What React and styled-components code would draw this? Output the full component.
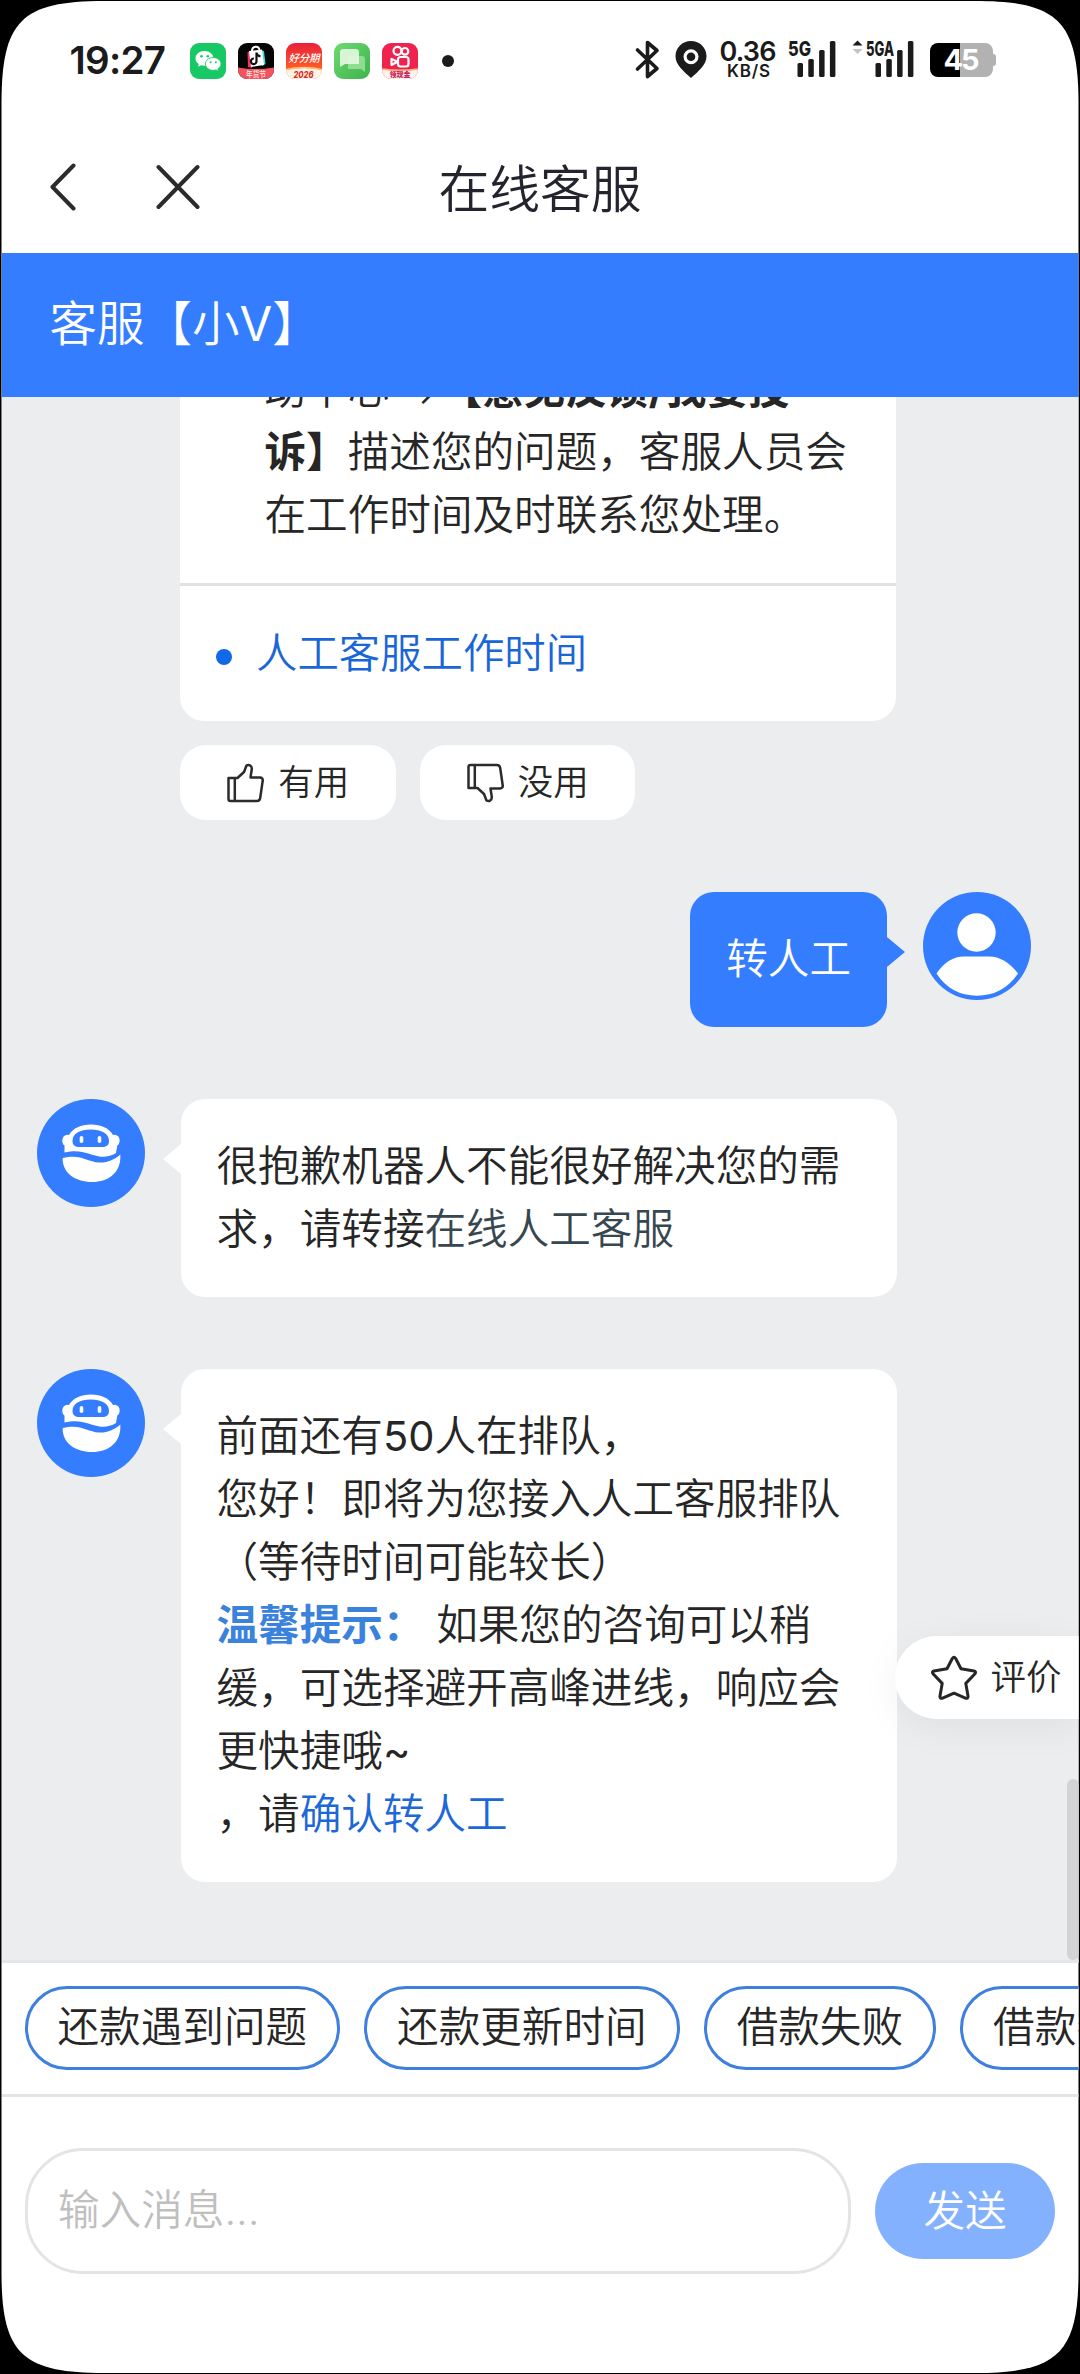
import styled, { createGlobalStyle } from 'styled-components';

const CHIPS = ['还款遇到问题', '还款更新时间', '借款失败', '借款额度'];

const App = () => {
  return (
    <>
      <GlobalStyle />
      <Screen>
        <StatusBar>
          <Clock>19:27</Clock>
          <AppIcons>
            <WechatIcon />
            <ShopIcon />
            <InstallmentIcon />
            <MessagesIcon />
            <KuaishouIcon />
          </AppIcons>
          <MoreDot />
          <StatusIcons />
        </StatusBar>

        <NavBar>
          <NavActions>
            <svg width="26" height="48" viewBox="0 0 26 48">
              <path d="M23.500 2.500L2.500 24l21 21.500" {...navStroke} />
            </svg>
            <svg width="44" height="46" viewBox="0 0 44 46">
              <path d="M2.500 3l39 40M41.500 3l-39 40" {...navStroke} />
            </svg>
          </NavActions>
          <NavTitle>在线客服</NavTitle>
        </NavBar>

        <AgentBar>
          <span>
            客服【小<Latin>V</Latin>】
          </span>
        </AgentBar>

        <Chat>
          <Answer>
            <AnswerCard>
              <AnswerBody>
                请您前往帮
                <br />
                助中心 →<b>【意见反馈/我要投</b>
                <br />
                <b>诉】</b>描述您的问题，客服人员会
                <br />
                在工作时间及时联系您处理。
              </AnswerBody>
              <RelatedLink>人工客服工作时间</RelatedLink>
            </AnswerCard>
            <Feedback>
              <FeedbackButton>
                <ThumbIcon />
                有用
              </FeedbackButton>
              <FeedbackButton>
                <ThumbIcon down />
                没用
              </FeedbackButton>
            </Feedback>
          </Answer>

          <UserRow>
            <UserBubble>转人工</UserBubble>
            <UserAvatar />
          </UserRow>

          <BotRow>
            <BotAvatar />
            <BotBubble>
              很抱歉机器人不能很好解决您的需
              <br />
              求，请转接<Muted>在线人工客服</Muted>
            </BotBubble>
          </BotRow>

          <BotRow>
            <BotAvatar />
            <BotBubble>
              前面还有<Latin>50</Latin>人在排队，
              <br />
              您好！即将为您接入人工客服排队
              <br />
              （等待时间可能较长）
              <br />
              <Tip>温馨提示：</Tip> 如果您的咨询可以稍
              <br />
              缓，可选择避开高峰进线，响应会
              <br />
              更快捷哦<Latin>~</Latin>
              <br />
              ，请<Link>确认转人工</Link>
            </BotBubble>
          </BotRow>

          <RateButton>
            <StarIcon />
            评价
          </RateButton>
          <ScrollThumb />
        </Chat>

        <ChipBar>
          {CHIPS.map((chip) => (
            <Chip key={chip}>{chip}</Chip>
          ))}
        </ChipBar>

        <Composer>
          <MessageInput placeholder="输入消息..." />
          <SendButton>发送</SendButton>
        </Composer>
      </Screen>
    </>
  );
};

const navStroke = {
  fill: 'none',
  stroke: '#2b2b2d',
  strokeWidth: 4,
  strokeLinecap: 'round',
  strokeLinejoin: 'round',
};

const iconFont = "Inter, 'Noto Sans CJK SC', sans-serif";

const WechatIcon = () => (
  <svg width="36" height="36" viewBox="0 0 36 36">
    <rect width="36" height="36" rx="9" fill="#17c964" />
    <path d="M14.500 8C9.500 8 5.500 11.300 5.500 15.400c0 2.300 1.300 4.300 3.300 5.700L8 23.800l3.100-1.600c1.100.3 2.200.5 3.400.5 5 0 9-3.300 9-7.300S19.500 8 14.500 8z" fill="#fff" />
    <path d="M23.200 14.500c-4.300 0-7.800 2.900-7.800 6.400s3.500 6.400 7.800 6.400c1 0 1.900-.1 2.700-.4l2.700 1.300-.7-2.300c1.900-1.200 3.100-3 3.100-5 0-3.500-3.500-6.400-7.800-6.400z" fill="#fff" stroke="#17c964" strokeWidth=".9" />
    <g fill="#17c964">
      <circle cx="11.500" cy="13.200" r="1.300" />
      <circle cx="17.800" cy="13.200" r="1.300" />
      <circle cx="20.600" cy="19.300" r="1" />
      <circle cx="25.800" cy="19.300" r="1" />
    </g>
  </svg>
);

const ShopIcon = () => (
  <svg width="36" height="36" viewBox="0 0 36 36">
    <clipPath id="shop">
      <rect width="36" height="36" rx="9" />
    </clipPath>
    <g clipPath="url(#shop)">
      <rect width="36" height="36" fill="#050505" />
      <path d="M14 8c0-5 7-6 7.500-1" fill="none" stroke="#fff" strokeWidth="2" />
      <path d="M9.500 9l3-.5L14 25l-4-1z" fill="#f2365e" />
      <path d="M22 7l4 1 1.500 13-3.500 2z" fill="#35e0e0" />
      <path d="M11 8l13-1.500L26 22l-13 2z" fill="#fff" />
      <path d="M18.500 9.500v8.700a2.800 2.800 0 1 1-2.600-2.700M18.500 10c.5 2 2 3.200 4 3.300" fill="none" stroke="#111" strokeWidth="2.200" />
      <path d="M0 24.500q18 3 36 0V36H0z" fill="#f2545f" />
      <text x="18" y="34.300" fontSize="7.500" fontWeight="500" fill="#ffe3e0" textAnchor="middle" textLength="20" lengthAdjust="spacingAndGlyphs" fontFamily={iconFont}>
        年货节
      </text>
    </g>
  </svg>
);

const InstallmentIcon = () => (
  <svg width="36" height="36" viewBox="0 0 36 36">
    <defs>
      <linearGradient id="instBg" x1="0" y1="0" x2="0" y2="1">
        <stop offset="0" stopColor="#e8203c" />
        <stop offset=".7" stopColor="#ff5a26" />
      </linearGradient>
      <clipPath id="inst">
        <rect width="36" height="36" rx="9" />
      </clipPath>
    </defs>
    <g clipPath="url(#inst)">
      <rect width="36" height="36" fill="url(#instBg)" />
      <path d="M0 27q18-4 36 0v9H0z" fill="#fff3e6" />
      <path d="M0 26.500q18-4 36 0" fill="none" stroke="#ffc27a" strokeWidth="1.500" />
      <text x="18" y="19" fontSize="10.500" fontWeight="500" fontStyle="italic" fill="#fff" textAnchor="middle" textLength="31" fontFamily={iconFont}>
        好分期
      </text>
      <text x="17.500" y="34.800" fontSize="9" fontWeight="800" fontStyle="italic" fill="#d92a22" textAnchor="middle" textLength="20" lengthAdjust="spacingAndGlyphs" fontFamily={iconFont}>
        2026
      </text>
    </g>
  </svg>
);

const MessagesIcon = () => (
  <svg width="36" height="36" viewBox="0 0 36 36">
    <defs>
      <linearGradient id="msgBg" x1="0" y1="0" x2="1" y2="1">
        <stop offset="0" stopColor="#6fd972" />
        <stop offset="1" stopColor="#3cb44b" />
      </linearGradient>
    </defs>
    <rect width="36" height="36" rx="9" fill="url(#msgBg)" />
    <path d="M14 13h14a3 3 0 0 1 3 3v13l-4-3H14z" fill="#a5e6a4" fillOpacity=".75" />
    <path d="M9 6h13a3 3 0 0 1 3 3v12H11l-5 3V9a3 3 0 0 1 3-3z" fill="#e6f8e2" fillOpacity=".9" />
  </svg>
);

const KuaishouIcon = () => (
  <svg width="36" height="36" viewBox="0 0 36 36">
    <defs>
      <clipPath id="ks">
        <rect width="36" height="36" rx="9" />
      </clipPath>
    </defs>
    <g clipPath="url(#ks)">
      <rect width="36" height="36" fill="#ee2350" />
      <path d="M0 26.500q18 2.500 36 0V36H0z" fill="#fff4ec" />
      <path d="M0 26q18 2.500 36 0" fill="none" stroke="#ffb27c" strokeWidth="1.500" />
      <g fill="none" stroke="#fff" strokeWidth="2.200">
        <circle cx="15.500" cy="7.800" r="4" />
        <circle cx="23" cy="8.300" r="3.300" />
        <rect x="16" y="14" width="10.500" height="9.500" rx="2.500" />
        <path d="M15.500 18.700L9.500 16v6z" strokeLinejoin="round" />
      </g>
      <text x="18" y="34.400" fontSize="7" fontWeight="800" fill="#c3215a" textAnchor="middle" textLength="21" lengthAdjust="spacingAndGlyphs" fontFamily={iconFont}>
        领现金
      </text>
    </g>
  </svg>
);

const SignalBars = ({ x }) => (
  <g fill="#1b1b1c">
    <rect x={x} y="23" width="5.500" height="14" rx="1.500" />
    <rect x={x + 10.8} y="19" width="5.500" height="18" rx="1.500" />
    <rect x={x + 21.6} y="10" width="5.500" height="27" rx="1.500" />
    <rect x={x + 32.4} y="1" width="5.500" height="36" rx="1.500" />
  </g>
);

const StatusIcons = () => (
  <StatusSvg width="364" height="42" viewBox="0 0 364 42" fontFamily={iconFont} fill="#1b1b1c">
    <path d="M2.500 10L22 28.500 12.500 36.500V2.500L22 10.500 2.500 29" fill="none" stroke="#1b1b1c" strokeWidth="3.600" strokeLinejoin="round" strokeLinecap="round" />
    <path
      fillRule="evenodd"
      d="M56 1c-8.800 0-15.500 6.700-15.500 15.200C40.500 25 49 31.500 56 38c7-6.500 15.500-13 15.500-21.800C71.500 7.700 64.800 1 56 1zm0 8.200a7.500 7.500 0 1 1 0 15 7.500 7.500 0 0 1 0-15z"
    />
    <circle cx="56" cy="16.700" r="4.300" />
    <text x="84.500" y="20.500" fontSize="27" fontWeight="600" textLength="57">0.36</text>
    <text x="92" y="36.500" fontSize="17" fontWeight="600" textLength="43">KB/S</text>
    <text x="153" y="15.500" fontSize="20.500" fontWeight="800" textLength="23" lengthAdjust="spacingAndGlyphs">5G</text>
    <SignalBars x={162.5} />
    <path d="M217.500 5.500L222.500.5l5 5z" />
    <path d="M217.500 9l5 5 5-5z" fill="#c4c4c4" />
    <text x="231" y="15.500" fontSize="20.500" fontWeight="800" textLength="28" lengthAdjust="spacingAndGlyphs">5GA</text>
    <SignalBars x={240.5} />
    <path d="M303 3h22v34h-22a8 8 0 0 1-8-8V11a8 8 0 0 1 8-8z" fill="#000" />
    <path d="M325 3h25a8 8 0 0 1 8 8v3q3 0 3 3v6q0 3-3 3v3a8 8 0 0 1-8 8h-25z" fill="#b2b2b2" />
    <text x="308.500" y="30" fontSize="29" fontWeight="700" fill="#fff" textLength="36">45</text>
  </StatusSvg>
);

const ThumbIcon = ({ down }) => (
  <svg width="38" height="40" viewBox="0 0 38 40" fill="none" stroke="#2b2b2b" strokeWidth="2.500" strokeLinejoin="round">
    <g transform={down ? 'matrix(1 0 0 -1 0 40)' : undefined}>
      <path d="M2.500 15h9l6.500-6 2.500-6.500c2.600-1.500 5.500.5 5.300 3.500L24.500 14.500H34c2 0 3 1.500 2.700 3.300L34.200 35c-.3 1.800-1.400 3-3.200 3H4.500c-1.200 0-2-.8-2-2z" />
      <path d="M8.800 15v23" />
    </g>
  </svg>
);

const StarIcon = () => (
  <svg width="48" height="46" viewBox="0 0 48 46" fill="none" stroke="#262626" strokeWidth="3" strokeLinejoin="round">
    <path d="M22.300 3.500q1.700-2.500 3.400 0l5.300 10.200 13 2.300q2.500.8 1 2.800l-9.200 9.600 2.300 13q-.2 2.600-2.700 1.700L24 38.200l-11.400 4.900q-2.500.9-2.700-1.700l2.300-13L3 18.800q-1.500-2 1-2.800l13-2.300z" />
  </svg>
);

const BotAvatar = () => (
  <AvatarSvg viewBox="0 0 108 108">
    <circle cx="54" cy="54" r="54" fill="#347dff" />
    <path d="M27.500 53.500V46.500c-3-1.500-3-8.500.5-10q2-1 4-.5C36 29 44 25.500 54 25.500S72 29 76 36q2-.5 4 .5c3.500 1.500 3.500 8.500.3 10l-1.300 7.500c-5 2.900-10 4.300-15.500 3.700C52 56 45 49.500 27.500 53.500z" fill="#fff" />
    <path d="M42 48c-4.500 0-6.500-2.500-6.500-6C35.500 34.500 43 30.500 53.700 30.500S72 34.500 72 42c0 3.500-2 6-6.500 6z" fill="#347dff" />
    <rect x="42.700" y="37" width="3.600" height="7" rx="1.800" fill="#fff" />
    <rect x="60.700" y="37" width="3.600" height="7" rx="1.800" fill="#fff" />
    <path d="M25.700 59c18-4.500 24 3.500 36.300 4.500 8 .5 16-3 21.300-8C84.500 73 72 83 55 83S25 73.500 25.700 59z" fill="#fff" />
  </AvatarSvg>
);

const UserAvatar = () => (
  <AvatarSvg viewBox="0 0 108 108">
    <circle cx="54" cy="54" r="54" fill="#347dff" />
    <circle cx="53.500" cy="40.500" r="19.200" fill="#fff" />
    <path d="M13.500 81.500Q25 64.500 41 64.500h25q16 0 29 17Q80 103.700 54 103.700T13.500 81.500z" fill="#fff" />
  </AvatarSvg>
);

const GlobalStyle = createGlobalStyle`
  * {
    box-sizing: border-box;
  }

  body {
    margin: 0;
    background: #000;
  }

  svg {
    display: block;
    flex: none;
  }

  button,
  input {
    font: inherit;
    color: inherit;
  }
`;

const Screen = styled.div`
  display: flex;
  flex-direction: column;
  width: 1080px;
  height: 2374px;
  padding: 1px 1.5px;
  overflow: hidden;
  font-family: Inter, 'Noto Sans CJK SC', sans-serif;
  font-size: 41.6px;
  font-weight: 350;
  line-height: 63px;
  color: #262626;
  background: #fff;
  clip-path: path(
    'M1.500 104C1.500 21 21 1 104 1H975C1058 1 1078.500 21 1078.500 104V2272C1078.500 2353 1058 2373 975 2373H104C21 2373 1.500 2353 1.500 2272Z'
  );
`;

const StatusBar = styled.div`
  display: flex;
  align-items: center;
  height: 120px;
  padding: 0 80px 0 68px;
`;

const Clock = styled.span`
  width: 120px;
  font-size: 38.5px;
  font-weight: 600;
  letter-spacing: -0.7px;
  line-height: 60px;
  padding-bottom: 2px;
  color: #1b1b1c;
`;

const AppIcons = styled.div`
  display: flex;
  gap: 12px;
`;

const MoreDot = styled.span`
  width: 12px;
  height: 12px;
  margin-left: 24px;
  border-radius: 50%;
  background: #1b1b1c;
`;

const StatusSvg = styled.svg`
  margin-left: auto;
  overflow: visible;
`;

const NavBar = styled.div`
  display: grid;
  grid-template-columns: 1fr auto 1fr;
  align-items: center;
  height: 132px;
  padding: 0 48px;
`;

const NavActions = styled.div`
  display: flex;
  align-items: center;
  gap: 80px;
`;

const NavTitle = styled.h1`
  margin: 0;
  padding-top: 4px;
  font-size: 50.8px;
  font-weight: 350;
  color: #24242e;
`;

const AgentBar = styled.div`
  display: flex;
  align-items: center;
  height: 144px;
  padding: 0 0 3px 48px;
  font-size: 47.5px;
  color: #fff;
  background: #347dff;
`;

/* Inter runs thinner than the CJK face at the same weight */
const Latin = styled.span`
  font-weight: 400;
`;

const Chat = styled.div`
  position: relative;
  display: flex;
  flex-direction: column;
  justify-content: flex-end;
  gap: 72px;
  height: 1566px;
  padding-bottom: 78px;
  overflow: hidden;
  border-bottom: 3px solid #e5e6e7;
  background: #ecedef;
`;

const Answer = styled.div`
  width: 716px;
  margin-left: 178.5px;
`;

const AnswerCard = styled.div`
  border-radius: 24px;
  background: #fff;
`;

const AnswerBody = styled.div`
  padding: 36px 30px 36px 84.5px;
  border-bottom: 3px solid #e1e1e1;
`;

const RelatedLink = styled.div`
  display: flex;
  align-items: center;
  gap: 24px;
  padding: 36px;
  font-size: 41.4px;
  color: #1a66d6;

  &::before {
    content: '';
    width: 16px;
    height: 16px;
    margin-top: 6px;
    border-radius: 50%;
    background: #0f69e8;
  }
`;

const Feedback = styled.div`
  display: flex;
  gap: 24px;
  margin-top: 24px;
`;

const FeedbackButton = styled.button`
  display: flex;
  align-items: center;
  justify-content: center;
  gap: 14px;
  width: 215.5px;
  height: 75px;
  padding: 0;
  border: 0;
  border-radius: 26px;
  font-size: 35.5px;
  background: #fff;
`;

const AvatarSvg = styled.svg`
  width: 108px;
  height: 108px;
`;

const UserRow = styled.div`
  display: flex;
  justify-content: flex-end;
  align-items: flex-start;
  gap: 36px;
  padding-right: 47.5px;
`;

const BotRow = styled.div`
  display: flex;
  align-items: flex-start;
  gap: 35.5px;
  padding-left: 35.5px;
`;

const Bubble = styled.div`
  position: relative;
  padding: 36px;
  border-radius: 24px;
`;

const UserBubble = styled(Bubble)`
  color: #fff;
  background: #347dff;

  &::after {
    content: '';
    position: absolute;
    top: 45px;
    left: 100%;
    border: 15px solid transparent;
    border-left: 18px solid #347dff;
    border-right: 0;
  }
`;

const BotBubble = styled(Bubble)`
  width: 716px;
  background: #fff;

  &::before {
    content: '';
    position: absolute;
    top: 45px;
    right: 100%;
    border: 15px solid transparent;
    border-right: 18px solid #fff;
    border-left: 0;
  }
`;

const Muted = styled.span`
  color: #37474f;
`;

const Tip = styled.b`
  font-weight: 700;
  color: #3b82dc;
`;

const Link = styled.a`
  color: #1d68d8;
`;

const RateButton = styled.button`
  position: absolute;
  top: 1239px;
  right: 0;
  display: flex;
  align-items: center;
  gap: 13px;
  width: 184px;
  height: 83px;
  padding: 0 0 0 35px;
  border: 0;
  border-radius: 42px 0 0 42px;
  font-size: 35.5px;
  white-space: nowrap;
  background: #fff;
  box-shadow: 0 8px 40px rgba(0, 0, 0, 0.06);
`;

const ScrollThumb = styled.div`
  position: absolute;
  right: 0;
  bottom: 0;
  width: 12px;
  height: 181px;
  border-radius: 6px;
  background: #d2d3d5;
`;

const ChipBar = styled.div`
  display: flex;
  gap: 24px;
  height: 134px;
  padding: 23px;
  overflow: hidden;
  border-bottom: 3px solid #e4e4e4;
`;

const Chip = styled.button`
  flex: none;
  height: 84px;
  padding: 0 30px;
  border: 3px solid #3f7fde;
  border-radius: 42px;
  line-height: 1;
  background: #fff;
`;

const Composer = styled.div`
  display: flex;
  align-items: center;
  gap: 24px;
  height: 228px;
  padding: 0 23.5px;
`;

const MessageInput = styled.input`
  flex: 1;
  height: 126px;
  padding: 0 30px 2px;
  border: 3px solid #e4e4e4;
  border-radius: 58px;
  background: #fff;

  &::placeholder {
    color: #bfbfbf;
  }
`;

const SendButton = styled.button`
  width: 180px;
  height: 96px;
  padding: 0;
  border: 0;
  border-radius: 48px;
  color: #fff;
  background: #84b1fd;
`;

export default App;
